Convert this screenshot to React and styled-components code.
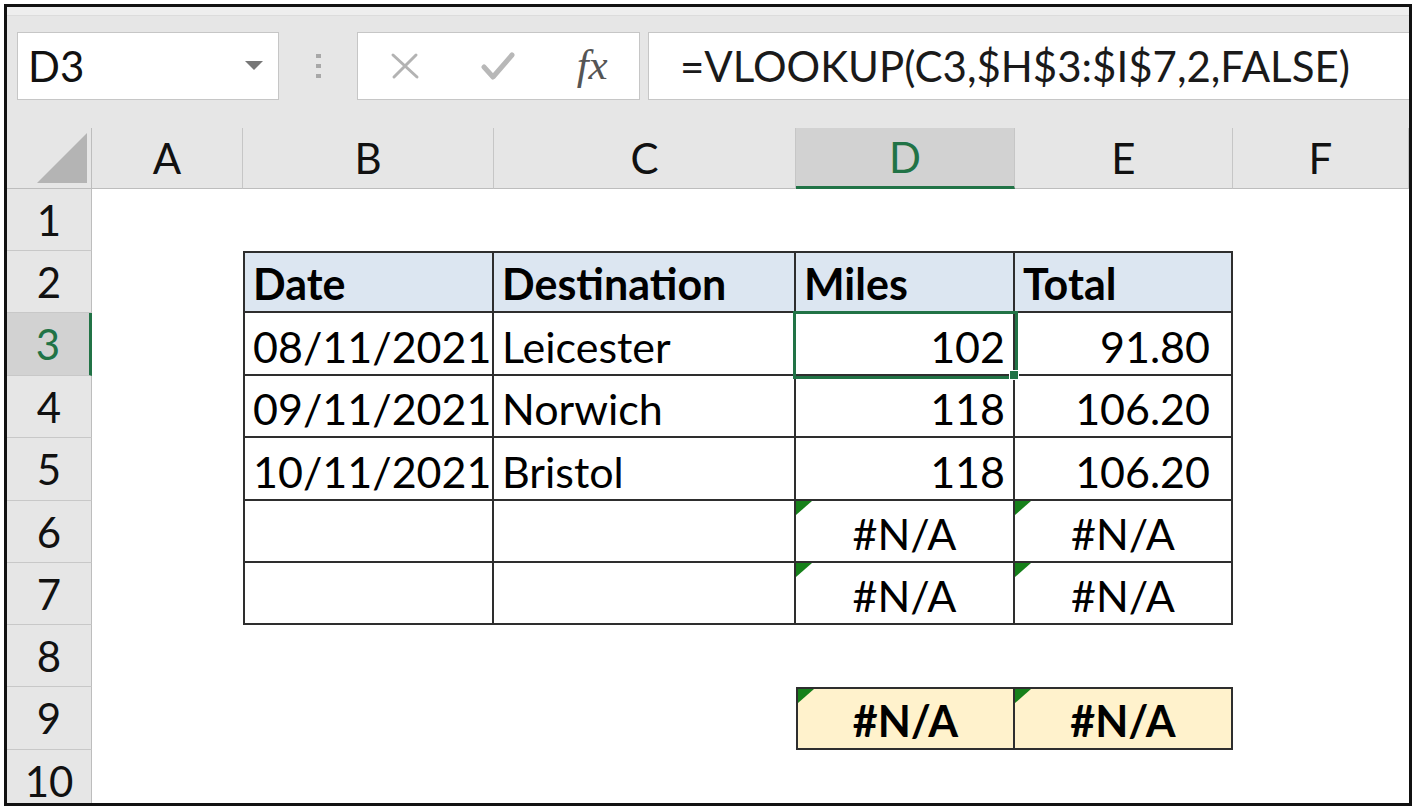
import React from 'react'
import styled, { createGlobalStyle, css } from 'styled-components'

const GREEN = '#217346'
const LINE = '#2e2e2e'

const GlobalStyle = createGlobalStyle`
  html, body { margin: 0; background: #fff; }
  body { font-family: Lato, 'Liberation Sans', sans-serif; }
`

const Frame = styled.div`
  box-sizing: border-box;
  width: 1408px;
  height: 802px;
  margin: 4px 0 0 4px;
  border: 3px solid #111;
  background: #e6e6e6;
  overflow: hidden;
  display: flex;
  flex-direction: column;
`

const TopStrip = styled.div`
  flex: none;
  height: 8px;
  background: #eeeeee;
  border-bottom: 1px solid #dcdcdc;
`

const FormulaBar = styled.div`
  flex: none;
  box-sizing: border-box;
  height: 112px;
  padding: 16px 0 28px 10px;
  display: flex;
  align-items: center;
`

const Box = styled.div`
  box-sizing: border-box;
  height: 68px;
  background: #fff;
  border: 1px solid #c6c6c6;
  display: flex;
  align-items: center;
`

const NameBox = styled(Box)`
  width: 262px;
  padding: 0 15px 0 10px;
  justify-content: space-between;
  font-size: 42px;
  line-height: 1;
  color: #111;
`

const Grip = styled.div`
  display: flex;
  flex-direction: column;
  gap: 6px;
  margin: 0 36px 0 37px;
  span {
    width: 5px;
    height: 4px;
    background: #a8a8a8;
  }
`

const FxBox = styled(Box)`
  width: 283px;
  display: grid;
  grid-template-columns: repeat(3, 1fr);
  justify-items: center;
  align-items: center;
`

const Fx = styled.span`
  font-family: 'Liberation Serif', serif;
  font-style: italic;
  font-size: 43px;
  line-height: 1;
  color: #555;
  margin-top: -4px;
`

const FormulaInput = styled(Box)`
  flex: 1;
  margin-left: 8px;
  border-right: none;
  padding-left: 31px;
  font-size: 42px;
  line-height: 1;
  color: #1a1a1a;
  white-space: nowrap;
`

const Sheet = styled.div`
  flex: none;
  display: grid;
  grid-template-columns: 85px 151px 251px 302px 219px 218px 1fr;
  grid-template-rows: 61px 62px 62px 63px 62px 63px 62px 62px 62px 63px 62px;
  background: #fff;
`

const Corner = styled.div`
  box-sizing: border-box;
  background: #e6e6e6;
  border-right: 1px solid #bdbdbd;
  border-bottom: 1px solid #bdbdbd;
  display: flex;
  align-items: flex-end;
  justify-content: flex-end;
  padding: 0 4px 5px 0;
  &::after {
    content: '';
    width: 50px;
    height: 50px;
    background: #b4b4b4;
    clip-path: polygon(100% 0, 100% 100%, 0 100%);
  }
`

const ColHead = styled.div`
  box-sizing: border-box;
  display: flex;
  align-items: center;
  justify-content: center;
  font-size: 42px;
  line-height: 1;
  background: ${p => (p.$active ? '#d2d2d2' : '#e6e6e6')};
  color: ${p => (p.$active ? GREEN : '#111')};
  border-right: 1px solid #c6c6c6;
  border-bottom: ${p => (p.$active ? `3px solid ${GREEN}` : '1px solid #bdbdbd')};
`

const RowHead = styled.div`
  box-sizing: border-box;
  display: flex;
  align-items: center;
  justify-content: center;
  font-size: 42px;
  line-height: 1;
  background: ${p => (p.$active ? '#d2d2d2' : '#e6e6e6')};
  color: ${p => (p.$active ? GREEN : '#111')};
  border-bottom: 1px solid #c8c8c8;
  border-right: ${p => (p.$active ? `3px solid ${GREEN}` : '1px solid #bdbdbd')};
`

const justify = { left: 'flex-start', right: 'flex-end', center: 'center' }

const Cell = styled.div`
  position: relative;
  box-sizing: border-box;
  display: flex;
  align-items: flex-end;
  justify-content: ${p => justify[p.$align || 'left']};
  padding: 0 ${p => p.$pr ?? 8}px 6px 8px;
  background: ${p => p.$fill || '#fff'};
  font-size: 43px;
  line-height: 1;
  font-weight: ${p => (p.$bold ? 700 : 400)};
  color: #000;
  white-space: nowrap;
  ${p =>
    p.$boxed &&
    css`
      border-right: 2px solid ${LINE};
      border-bottom: 2px solid ${LINE};
    `}
  ${p => p.$left && css`border-left: 2px solid ${LINE};`}
  ${p => p.$top && css`border-top: 2px solid ${LINE};`}
`

const ErrorFlag = styled.span`
  position: absolute;
  top: 0;
  left: 0;
  width: 0;
  height: 0;
  border-top: 14px solid #16801a;
  border-right: 16px solid transparent;
`

const Selection = styled.span`
  position: absolute;
  z-index: 2;
  inset: -2px -5px -5px -3px;
  border: 3px solid ${GREEN};
  pointer-events: none;
  &::after {
    content: '';
    position: absolute;
    right: -4px;
    bottom: -4px;
    width: 8px;
    height: 8px;
    background: ${GREEN};
    border: 1px solid #fff;
  }
`

const COLS = ['A', 'B', 'C', 'D', 'E', 'F']
const HEAD = '#dce6f1'
const TOTAL = '#fff2cc'

const data = {
  2: {
    B: { v: 'Date', bold: true, fill: HEAD },
    C: { v: 'Destination', bold: true, fill: HEAD },
    D: { v: 'Miles', bold: true, fill: HEAD },
    E: { v: 'Total', bold: true, fill: HEAD },
  },
  3: {
    B: { v: '08/11/2021' },
    C: { v: 'Leicester' },
    D: { v: '102', align: 'right', selected: true },
    E: { v: '91.80', align: 'right', pr: 21 },
  },
  4: {
    B: { v: '09/11/2021' },
    C: { v: 'Norwich' },
    D: { v: '118', align: 'right' },
    E: { v: '106.20', align: 'right', pr: 21 },
  },
  5: {
    B: { v: '10/11/2021' },
    C: { v: 'Bristol' },
    D: { v: '118', align: 'right' },
    E: { v: '106.20', align: 'right', pr: 21 },
  },
  6: {
    D: { v: '#N/A', align: 'center', err: true },
    E: { v: '#N/A', align: 'center', err: true },
  },
  7: {
    D: { v: '#N/A', align: 'center', err: true },
    E: { v: '#N/A', align: 'center', err: true },
  },
  9: {
    D: { v: '#N/A', align: 'center', err: true, bold: true, fill: TOTAL },
    E: { v: '#N/A', align: 'center', err: true, bold: true, fill: TOTAL },
  },
}

// which cells carry a border, and whether they open a region on the left / top
function frameOf(row, col) {
  const c = COLS.indexOf(col)
  if (row >= 2 && row <= 7 && c >= 1 && c <= 4) {
    return { boxed: true, left: c === 1, top: row === 2 }
  }
  if (row === 9 && c >= 3 && c <= 4) {
    return { boxed: true, left: c === 3, top: true }
  }
  return {}
}

const CrossIcon = () => (
  <svg width="30" height="28" viewBox="0 0 30 28">
    <path d="M3 3 L27 25 M26 3 L4 25" stroke="#b3b3b3" strokeWidth="3" strokeLinecap="round" fill="none" />
  </svg>
)

const CheckIcon = () => (
  <svg width="34" height="30" viewBox="0 0 34 30">
    <path d="M3 16 L12 26 L31 4" stroke="#b8b8b8" strokeWidth="5" strokeLinecap="round" strokeLinejoin="round" fill="none" />
  </svg>
)

const DropArrow = () => (
  <svg width="18" height="10" viewBox="0 0 18 10">
    <path d="M0 0 H18 L9 9 Z" fill="#777" />
  </svg>
)

export default function App() {
  const rows = Array.from({ length: 10 }, (_, i) => i + 1)
  return (
    <>
      <GlobalStyle />
      <Frame>
        <TopStrip />
        <FormulaBar>
          <NameBox>
            <span>D3</span>
            <DropArrow />
          </NameBox>
          <Grip>
            <span />
            <span />
            <span />
          </Grip>
          <FxBox>
            <CrossIcon />
            <CheckIcon />
            <Fx>fx</Fx>
          </FxBox>
          <FormulaInput>=VLOOKUP(C3,$H$3:$I$7,2,FALSE)</FormulaInput>
        </FormulaBar>
        <Sheet>
          <Corner />
          {COLS.map(col => (
            <ColHead key={col} $active={col === 'D'}>
              {col}
            </ColHead>
          ))}
          {rows.map(row => (
            <React.Fragment key={row}>
              <RowHead $active={row === 3}>{row}</RowHead>
              {COLS.map(col => {
                const cell = (data[row] && data[row][col]) || {}
                const f = frameOf(row, col)
                return (
                  <Cell
                    key={col}
                    $align={cell.align}
                    $bold={cell.bold}
                    $fill={cell.fill}
                    $pr={cell.pr}
                    $boxed={f.boxed}
                    $left={f.left}
                    $top={f.top}
                  >
                    {cell.err && <ErrorFlag />}
                    {cell.v}
                    {cell.selected && <Selection />}
                  </Cell>
                )
              })}
            </React.Fragment>
          ))}
        </Sheet>
      </Frame>
    </>
  )
}
